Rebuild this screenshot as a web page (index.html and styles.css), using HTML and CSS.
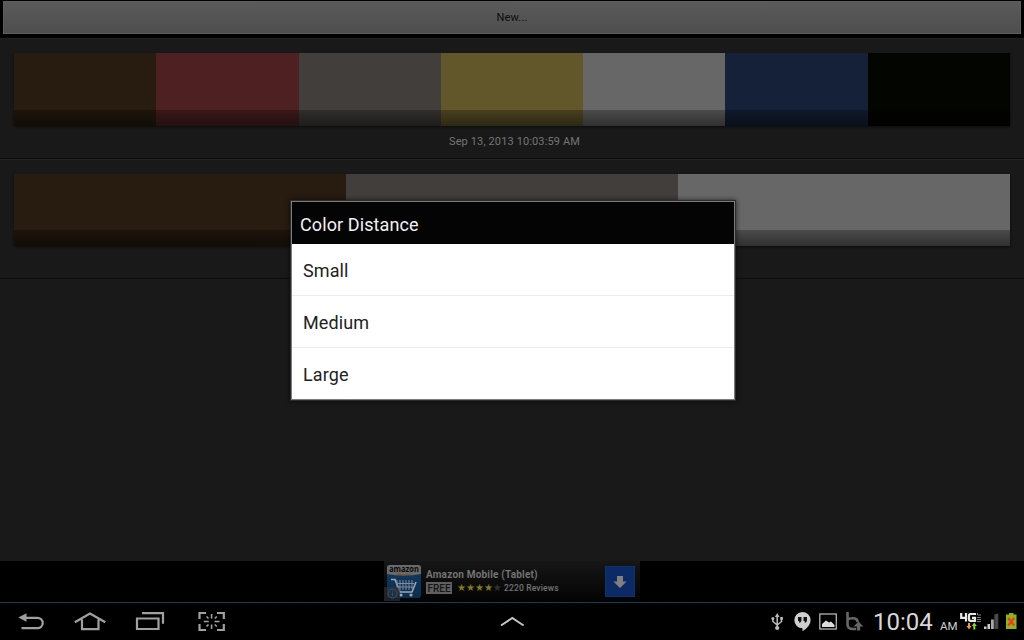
FILE: index.html
```html
<!DOCTYPE html>
<html lang="en">

<head>
  <meta charset="UTF-8">
  <meta name="viewport" content="width=device-width, initial-scale=1.0">
  <title>Color Distance</title>
  <link rel="stylesheet" href="styles.css">
</head>

<body>
  <div class="app">
    <div class="top">
      <button class="new" type="button">New...</button>
    </div>

    <div class="palette">
      <div class="swatches">
        <span class="brown"></span>
        <span class="red"></span>
        <span class="taupe"></span>
        <span class="yellow"></span>
        <span class="white"></span>
        <span class="blue"></span>
        <span class="black"></span>
      </div>
      <p class="date">Sep 13, 2013 10:03:59 AM</p>
    </div>
    <div class="palette">
      <div class="swatches">
        <span class="brown"></span>
        <span class="taupe"></span>
        <span class="white"></span>
      </div>
    </div>

    <div class="adbar">
      <div class="ad">
        <svg class="logo" width="37" height="40" viewBox="384 561 37 40">
          <defs>
            <linearGradient id="sea" x1="0" y1="0" x2="0" y2="1">
              <stop offset="0" stop-color="#123a60" />
              <stop offset="1" stop-color="#0b2d52" />
            </linearGradient>
          </defs>
          <rect x="387" y="565" width="34" height="33" rx="3" fill="url(#sea)" />
          <path d="M387 574v-6q0-3 3-3h28q3 0 3 3v6q-17 3-34 0z" fill="#6a6a6a" />
          <text x="404" y="572" class="amazon" textLength="30" lengthAdjust="spacingAndGlyphs">amazon</text>
          <path d="M396 573.8q8 2.400 15 0" fill="none" stroke="#7a5520" stroke-width="1" />
          <path d="M391 579.500h4l5 12.500h12l4-10" fill="none" stroke="#a0a6ac" stroke-width="1.600" />
          <path d="M397 580v8M400 580v10M403 580v10M406 580v10M409 580v10M412 580v9M396 583.500h18M397.500 587h15" stroke="#7f8c99" stroke-width="1" />
          <circle cx="401" cy="595" r="1.600" fill="#a0a6ac" />
          <circle cx="411" cy="595" r="1.600" fill="#a0a6ac" />
          <path d="M384 587h12q4 0 4 4v10h-16z" fill="#2c3238" opacity=".65" />
          <circle cx="392.500" cy="593.500" r="4.500" fill="none" stroke="#3d5063" />
          <path d="M392.500 592.500v3.500M392.500 590.500v1" stroke="#3d5063" />
        </svg>
        <div class="about">
          <div class="adname">Amazon Mobile (Tablet)</div>
          <div class="rating">
            <span class="free">FREE</span>
            <span class="stars">★★★★<i>★</i></span>
            <span class="reviews">2220 Reviews</span>
          </div>
        </div>
        <div class="download">
          <svg width="14" height="14" viewBox="0 0 14 14"><path d="M4 1h6v5.500h3.500L7 13 .5 6.500H4z" fill="#808080" /></svg>
        </div>
      </div>
    </div>
  </div>

  <div class="dialog">
    <h1>Color Distance</h1>
    <ul>
      <li>Small</li>
      <li>Medium</li>
      <li>Large</li>
    </ul>
  </div>

  <div class="navbar">
    <div class="keys">
      <svg width="28" height="24" viewBox="17 610 28 24">
        <path d="M25 617.800h12.500a5.200 5.200 0 0 1 0 10.400H21.500" fill="none" stroke="#a0a0a0" stroke-width="2.200" />
        <path d="M18.300 617.500l8.200-4.300v8.600z" fill="#a0a0a0" />
      </svg>
      <svg width="34" height="24" viewBox="73 610 34 24">
        <path d="M74.800 622.300L90 613.500l15.300 8.800M82 619.500v9.700h16.500v-9.700" fill="none" stroke="#a0a0a0" stroke-width="2.200" />
      </svg>
      <svg width="30" height="24" viewBox="135 610 30 24">
        <path d="M137 618.500h21.500V629H137zM142 613.200h21v10.600" fill="none" stroke="#a0a0a0" stroke-width="2.200" />
      </svg>
      <svg width="28" height="24" viewBox="197 610 28 24">
        <path d="M199.500 619v-6h6.500M217 613h6.800v6M223.800 624v6H217M206 630h-6.500v-6" fill="none" stroke="#a0a0a0" stroke-width="2.200" />
        <path d="M211.600 614v4.500M211.600 624.500v4.500M203.800 621.500h5M214.500 621.500h5M206.500 616.500l2 2M216.800 616.500l-2 2M206.500 626.500l2-2M216.800 626.500l-2-2" stroke="#a0a0a0" stroke-width="1.600" />
      </svg>
    </div>

    <svg class="up" width="26" height="24" viewBox="499 610 26 24">
      <path d="M501 625.500l11.300-7.500 11.300 7.500" fill="none" stroke="#c4c4c4" stroke-width="2" />
    </svg>

    <div class="status">
      <svg class="usb" width="14" height="24" viewBox="770 610 14 24">
        <path d="M777.200 616v12M772.900 618v3.500l4.300 3.500 4.300-3.500V618" fill="none" stroke="#bbb" stroke-width="1.500" />
        <path d="M777.200 613l2.300 4h-4.600z" fill="#bbb" />
        <circle cx="777.200" cy="628" r="2.100" fill="#bbb" />
        <circle cx="772.900" cy="618.500" r="1.500" fill="#bbb" />
        <rect x="780.200" y="617" width="2.700" height="2.700" fill="#bbb" />
      </svg>
      <svg class="hangouts" width="18" height="24" viewBox="793 610 18 24">
        <path d="M802.300 612a8.300 8.300 0 0 1 8.300 8.100q0 6.300-8.100 11.200v-3.100a8.100 8.100 0 0 1-.2-16.200z" fill="#cfcfcf" />
        <path d="M798 617h3.500v3.300q0 2.300-2.300 2.800v-2.200H798zM803.500 617h3.500v3.300q0 2.300-2.300 2.800v-2.200h-1.200z" fill="#111" />
      </svg>
      <svg class="picture" width="19" height="24" viewBox="818 610 19 24">
        <rect x="819.800" y="614" width="16.500" height="15" fill="none" stroke="#b5b5b5" stroke-width="1.300" />
        <path d="M822 627v-3l4-3.500 3 2 2-1 3.500 3.500v2z" fill="#ddd" />
      </svg>
      <svg class="upload" width="20" height="24" viewBox="845 610 20 24">
        <path d="M847.500 612v12.500q0 4.500 5.500 4.500h3M847.500 620q1-1.800 5.500-1.800 4.500 0 4.500 3.800" fill="none" stroke="#666" stroke-width="2.600" />
        <path d="M858.500 621.500l5 5h-3.300v4h-3.400v-4h-3.300z" fill="#666" />
      </svg>
      <span class="clock">10:04</span>
      <span class="ampm">AM</span>
      <svg class="lte" width="24" height="24" viewBox="959 610 24 24">
        <path d="M961.200 613v4.800h6M966 613v8.500M976 614h-5.500q-1.500 0-1.500 1.500v3.800q0 1.500 1.500 1.500h4.500v-3h-3" fill="none" stroke="#e8e8e8" stroke-width="2.200" />
        <path d="M977.500 613v2h3.500M977 617.500h4M977 619.500h4M977 621.500h4" stroke="#999" stroke-width=".8" fill="none" />
        <path d="M968 623h2v3h1.500l-2.500 3.500-2.500-3.500h1.500z" fill="#f29a2e" />
        <path d="M973.300 629.500h2V626h1.500l-2.500-3.500-2.500 3.500h1.500z" fill="#8fd821" />
      </svg>
      <svg class="signal" width="16" height="24" viewBox="983 610 16 24">
        <path d="M984 626.500h2.500v2.500H984zM987.500 624h2.500v5h-2.500z" fill="#ccc" />
        <path d="M991 619.500h2.800v9.500H991z" fill="#aaa" />
        <path d="M994.300 614.500l4-1v15.500h-4z" fill="#484848" />
      </svg>
      <svg class="battery" width="12" height="24" viewBox="1005 610 12 24">
        <path d="M1006 614.500h3V613h4.500v1.500h3V629H1006z" fill="#8ab51d" />
        <path d="M1008.200 618l6 7.500M1014.200 618l-6 7.500" stroke="#ec3d25" stroke-width="2.400" />
      </svg>
    </div>
  </div>
</body>

</html>
```
FILE: styles.css
```css
* {
  box-sizing: border-box;
}

body {
  margin: 0;
  width: 1024px;
  height: 640px;
  overflow: hidden;
  background: #000;
  font-family: Roboto, sans-serif;
  display: flex;
  flex-direction: column;
}

.app {
  flex: 1;
  background: #191919;
  display: flex;
  flex-direction: column;
}

.top {
  height: 38px;
  padding: 1px 3px 4px;
  background: #000;
}

.new {
  display: block;
  width: 100%;
  height: 33px;
  border: 1px solid #5e5e5e;
  background: linear-gradient(#5a5a5a, #4e4e4e);
  color: #0c0c0c;
  font-family: Roboto, sans-serif;
  font-size: 11px;
  letter-spacing: 0.2px;
  padding: 0;
}

.palette {
  height: 121px;
  padding: 14px 14px 0;
  border-bottom: 1px solid #0c0c0c;
  border-top: 1px solid #232323;
}

.palette + .palette {
  height: 120px;
}

.swatches {
  display: flex;
  height: 73px;
  position: relative;
  box-shadow: 0 1px 2px #0c0c0c;
}

.palette + .palette .swatches {
  height: 72px;
}

.swatches span {
  flex: 1;
}

/* shade along the bottom of the strip */
.swatches::after {
  content: "";
  position: absolute;
  left: 0;
  right: 0;
  bottom: 0;
  height: 16px;
  background: linear-gradient(rgba(0, 0, 0, 0.27), rgba(0, 0, 0, 0.54));
}

.brown { background: #281b10; }
.red { background: #4f2021; }
.taupe { background: #423e3b; }
.yellow { background: #62572a; }
.white { background: #676767; }
.blue { background: #152139; }
.black { background: #030500; }

.date {
  margin: 9px 0 0 5px;
  text-align: center;
  font-size: 11px;
  line-height: 14px;
  letter-spacing: 0.13px;
  color: #757575;
}

.adbar {
  margin-top: auto;
  height: 41px;
  background: #000;
  display: flex;
  justify-content: center;
}

.ad {
  width: 256px;
  height: 41px;
  background: linear-gradient(#161616, #030303);
  display: flex;
}

.amazon {
  font-family: "Open Sans", sans-serif;
  font-size: 8px;
  font-weight: bold;
  text-anchor: middle;
  fill: #0b0b0b;
}

.about {
  margin-left: 5px;
  padding-top: 6px;
  width: 179px;
  color: #747474;
}

.adname {
  font-size: 10px;
  font-weight: bold;
  line-height: 15px;
  height: 14px;
  letter-spacing: 0.2px;
  white-space: nowrap;
}

.rating {
  display: flex;
  align-items: center;
  height: 13px;
}

.free {
  width: 26px;
  height: 12px;
  background: #606060;
  color: #161616;
  font-size: 10px;
  font-weight: 500;
  line-height: 13px;
  text-align: center;
}

.stars {
  width: 43px;
  margin-left: 5px;
  font-family: "DejaVu Sans", sans-serif;
  font-size: 10px;
  line-height: 13px;
  color: #857a24;
}

.stars i {
  font-style: normal;
  color: #303030;
}

.reviews {
  margin-left: 4px;
  font-size: 8.5px;
  font-weight: 500;
  letter-spacing: 0.15px;
}

.download {
  width: 30px;
  height: 31px;
  margin-top: 5px;
  background: #0c2b66;
  border: 1px solid #10316e;
  display: flex;
  align-items: center;
  justify-content: center;
}

/* popup above the list */
.dialog {
  position: absolute;
  left: 291px;
  top: 201px;
  width: 444px;
  height: 199px;
  border: 1px solid #7c7c7c;
  background: #fff;
  box-shadow: 0 0 0 1px #2c2c2c, 0 0 5px 1px rgba(0, 0, 0, 0.65);
}

.dialog h1 {
  margin: 0;
  height: 42px;
  padding: 2px 0 0 8px;
  background: #040404;
  color: #f2f2f2;
  font-size: 18px;
  font-weight: normal;
  line-height: 42px;
  letter-spacing: 0.1px;
}

.dialog ul {
  list-style: none;
  margin: 0;
  padding: 0;
}

.dialog li {
  height: 52px;
  padding-left: 11px;
  border-bottom: 1px solid #ececec;
  color: #222;
  font-size: 18px;
  line-height: 53px;
  letter-spacing: 0.1px;
}

.dialog li:last-child {
  border-bottom: 0;
}

.navbar {
  height: 38px;
  border-top: 1px solid #163c50;
  background: #000;
  padding: 7px 7px 0 17px;
  display: flex;
}

.navbar svg {
  display: block;
  flex: none;
}

.keys {
  display: flex;
  width: 482px;
}

.keys svg + svg {
  margin-left: 28px;
}

.keys svg:last-child {
  margin-left: 32px;
}

.status {
  display: flex;
  margin-left: auto;
}

.usb {
  margin-right: 9px;
}

.hangouts {
  margin-right: 7px;
}

.picture {
  margin-right: 8px;
}

.upload {
  margin-right: 8px;
}

.signal {
  margin-right: 6px;
}

.clock {
  width: 67px;
  font-size: 24px;
  line-height: 24px;
  color: #d8d8d8;
}

.ampm {
  width: 19px;
  font-size: 11.5px;
  line-height: 33px;
  color: #d0d0d0;
}
```
